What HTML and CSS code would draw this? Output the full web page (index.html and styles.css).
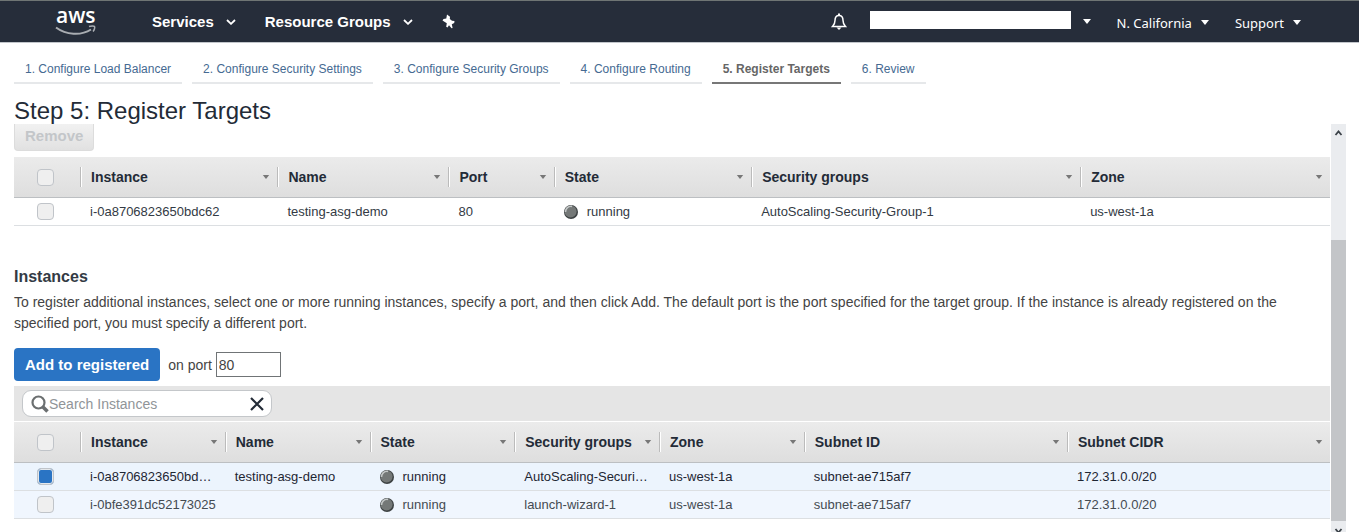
FILE: index.html
```html
<!DOCTYPE html>
<html lang="en">
<head>
<meta charset="utf-8">
<title>Step 5: Register Targets</title>
<link rel="stylesheet" href="styles.css">
</head>
<body>
<svg class="defs" aria-hidden="true">
  <symbol id="chevron" viewBox="0 0 10 6"><path d="M1 1l4 3.8L9 1" fill="none" stroke="currentColor" stroke-width="1.8"/></symbol>
  <symbol id="caret" viewBox="0 0 8 5"><path d="M0 0h8L4 5z" fill="currentColor"/></symbol>
  <symbol id="orb" viewBox="0 0 14 14"><circle cx="7" cy="7" r="7" fill="#3c4142"/><circle cx="6.6" cy="6.5" r="6" fill="#747877"/><path d="M1.5 7A5.5 5.5 0 0 1 8 1.4" fill="none" stroke="#c4c8c8" stroke-width="1.6"/></symbol>
</svg>

<header class="topbar">
  <a class="logo" href="#" aria-label="aws">
    <svg width="42" height="28" viewBox="0 0 42 28">
      <text x="1" y="15" class="logo-text">aws</text>
      <path d="M1 19.500c10 7.500 25 8.500 35 2" fill="none" stroke="#a9adb2" stroke-width="2"/>
      <path d="M34 18.500c2-.8 5-.8 5.500 0s0 3.500-1.500 5" fill="none" stroke="#a9adb2" stroke-width="1.500"/>
    </svg>
  </a>
  <nav class="mainnav">
    <button class="nav-item">Services <svg width="10" height="6"><use href="#chevron"/></svg></button>
    <button class="nav-item">Resource Groups <svg width="10" height="6"><use href="#chevron"/></svg></button>
    <button class="nav-item" aria-label="Pin shortcuts">
      <svg width="13" height="15" viewBox="0 0 13 15"><path d="M5 .5l3 2.300-.2 2.200 2.200 1.800 2.500.2-.3 2-2.400 1.200.8 3.800-1 .2-2.600-3-1.500 2.300-1.300-.8.600-3.500L.5 6.500 1.500 5l2.800-.4z" fill="#fff"/></svg>
    </button>
  </nav>
  <div class="account">
    <button class="bell" aria-label="Notifications">
      <svg width="16" height="18" viewBox="0 0 16 18"><path d="M1.500 13.500h13c-2-2-2.500-3.500-2.500-6 0-3-1.500-5-4-5s-4 2-4 5c0 2.500-.5 4-2.500 6z" fill="none" stroke="#fff" stroke-width="1.500"/><path d="M8 .5v2" stroke="#fff" stroke-width="2"/><path d="M5.500 14.500h5L8 17z" fill="#fff"/></svg>
    </button>
    <button class="user" aria-label="Account"><span class="user-name"></span><svg width="8" height="5"><use href="#caret"/></svg></button>
    <button class="menu">N. California <svg width="8" height="5"><use href="#caret"/></svg></button>
    <button class="menu">Support <svg width="8" height="5"><use href="#caret"/></svg></button>
  </div>
</header>

<nav class="steps">
  <a href="#">1. Configure Load Balancer</a>
  <a href="#">2. Configure Security Settings</a>
  <a href="#">3. Configure Security Groups</a>
  <a href="#">4. Configure Routing</a>
  <a href="#" class="current" aria-current="step">5. Register Targets</a>
  <a href="#">6. Review</a>
</nav>
<h1>Step 5: Register Targets</h1>

<div class="viewport">
  <main class="content">
    <button class="btn remove" disabled>Remove</button>
    <table class="grid">
      <colgroup><col class="c-check"><col class="w15"><col class="w13"><col class="w8"><col class="w15"><col class="w25"><col></colgroup>
      <thead><tr>
        <th><input type="checkbox" aria-label="Select all registered"></th>
        <th><div class="head">Instance <svg width="8" height="4"><use href="#caret"/></svg></div></th>
        <th><div class="head">Name <svg width="8" height="4"><use href="#caret"/></svg></div></th>
        <th><div class="head">Port <svg width="8" height="4"><use href="#caret"/></svg></div></th>
        <th><div class="head">State <svg width="8" height="4"><use href="#caret"/></svg></div></th>
        <th><div class="head">Security groups <svg width="8" height="4"><use href="#caret"/></svg></div></th>
        <th><div class="head">Zone <svg width="8" height="4"><use href="#caret"/></svg></div></th>
      </tr></thead>
      <tbody><tr>
        <td><input type="checkbox" aria-label="Select i-0a8706823650bdc62"></td>
        <td>i-0a8706823650bdc62</td><td>testing-asg-demo</td><td>80</td>
        <td><div class="state"><svg width="14" height="14"><use href="#orb"/></svg>running</div></td>
        <td>AutoScaling-Security-Group-1</td><td>us-west-1a</td>
      </tr></tbody>
    </table>

    <h2>Instances</h2>
    <p>To register additional instances, select one or more running instances, specify a port, and then click Add. The default port is the port specified for the target group. If the instance is already registered on the specified port, you must specify a different port.</p>

    <div class="add-row">
      <button class="btn add">Add to registered</button>
      <label for="port">on port</label>
      <input id="port" class="port" type="text" value="80">
    </div>

    <div class="searchbar">
      <div class="search">
        <svg width="18" height="18" viewBox="0 0 18 18"><circle cx="7.500" cy="7.500" r="6" fill="none" stroke="#6b6f70" stroke-width="2.200"/><path d="M11.500 11.500l5 5" stroke="#6b6f70" stroke-width="3.500"/></svg>
        <input type="text" placeholder="Search Instances" aria-label="Search Instances">
        <button aria-label="Clear search"><svg width="14" height="14" viewBox="0 0 14 14"><path d="M1 1l12 12M13 1L1 13" stroke="#232b37" stroke-width="2.200"/></svg></button>
      </div>
    </div>
    <table class="grid instances">
      <colgroup><col class="c-check"><col class="w11"><col class="w11"><col class="w11"><col class="w11"><col class="w11"><col class="w20"><col></colgroup>
      <thead><tr>
        <th><input type="checkbox" aria-label="Select all instances"></th>
        <th><div class="head">Instance <svg width="8" height="4"><use href="#caret"/></svg></div></th>
        <th><div class="head">Name <svg width="8" height="4"><use href="#caret"/></svg></div></th>
        <th><div class="head">State <svg width="8" height="4"><use href="#caret"/></svg></div></th>
        <th><div class="head">Security groups <svg width="8" height="4"><use href="#caret"/></svg></div></th>
        <th><div class="head">Zone <svg width="8" height="4"><use href="#caret"/></svg></div></th>
        <th><div class="head">Subnet ID <svg width="8" height="4"><use href="#caret"/></svg></div></th>
        <th><div class="head">Subnet CIDR <svg width="8" height="4"><use href="#caret"/></svg></div></th>
      </tr></thead>
      <tbody>
        <tr class="selected">
          <td><input type="checkbox" checked aria-label="Select first instance"></td>
          <td>i-0a8706823650bd…</td><td>testing-asg-demo</td>
          <td><div class="state"><svg width="14" height="14"><use href="#orb"/></svg>running</div></td>
          <td>AutoScaling-Securi…</td><td>us-west-1a</td><td>subnet-ae715af7</td><td>172.31.0.0/20</td>
        </tr>
        <tr>
          <td><input type="checkbox" aria-label="Select second instance"></td>
          <td>i-0bfe391dc52173025</td><td></td>
          <td><div class="state"><svg width="14" height="14"><use href="#orb"/></svg>running</div></td>
          <td>launch-wizard-1</td><td>us-west-1a</td><td>subnet-ae715af7</td><td>172.31.0.0/20</td>
        </tr>
      </tbody>
    </table>
  </main>
  <div class="scrollbar" aria-hidden="true">
    <svg width="15" height="16" viewBox="0 0 15 16"><path d="M4.500 11l3-3.500 3 3.500" fill="none" stroke="#3b4248" stroke-width="1.800"/></svg>
    <div class="thumb"></div>
    <svg width="15" height="16" viewBox="0 0 15 16"><path d="M4.500 8l3 3.500 3-3.500" fill="none" stroke="#3b4248" stroke-width="1.800"/></svg>
  </div>
</div>
</body>
</html>
```
FILE: styles.css
```css
* { box-sizing: border-box; }
body {
  margin: 0;
  height: 100vh;
  display: flex;
  flex-direction: column;
  overflow: hidden;
  background: #fff;
  color: #444;
  font-family: "Liberation Sans", Arial, sans-serif;
  font-size: 14px;
}
button { font-family: inherit; border: 0; padding: 0; background: none; color: inherit; }
svg { display: block; flex: none; }
.defs { position: absolute; width: 0; height: 0; }

.topbar {
  flex: none;
  display: flex;
  align-items: center;
  height: 43px;
  padding: 0 58px 0 55px;
  background: #262d3a;
  border-top: 1px solid #6f7574;
  border-bottom: 1px solid #c2c6cb;
  color: #fff;
}
.logo { margin-right: 55px; }
.logo svg { overflow: visible; }
.logo-text { font: 600 21px "Open Sans", "Noto Sans", sans-serif; fill: #fff; }
.mainnav { display: flex; gap: 29px; }
.nav-item { display: flex; align-items: center; gap: 12px; font-size: 15px; font-weight: bold; }
.account { display: flex; align-items: center; margin-left: auto; gap: 26px; }
.bell { margin-right: -3px; }
.user { display: flex; align-items: center; gap: 12px; }
.user-name { width: 201px; height: 18px; margin-bottom: 4px; background: #fff; }
.menu { display: flex; align-items: center; gap: 9px; padding-top: 2px; font: 13px "Noto Sans", sans-serif; }

.steps { flex: none; display: flex; gap: 10px; padding: 16px 14px 0; }
.steps a {
  padding: 0 11px;
  height: 25px;
  line-height: 20px;
  border-bottom: 2px solid #e6e8ea;
  color: #456a92;
  font-size: 12px;
  text-decoration: none;
}
.steps .current { color: #666; font-weight: bold; border-bottom-color: #777; }
h1 { flex: none; margin: 0; padding: 14px 14px 0; height: 40px; font-size: 24px; font-weight: normal; line-height: 26px; color: #232b37; }

.viewport { flex: 1; min-height: 0; display: flex; overflow: hidden; padding: 0 12px 0 14px; }
.content { flex: 1; min-width: 0; }
.btn { display: block; height: 33px; padding: 0 11px; border-radius: 4px; font-size: 15px; font-weight: bold; }
.remove {
  height: 27px;
  margin: 0 0 6px;
  border: 1px solid #dcdcdc;
  border-top: 0;
  border-radius: 0 0 4px 4px;
  padding: 0 10px 4px;
  background: linear-gradient(#f1f1f1, #e1e1e1);
  color: #c3c6c9;
}

.grid { width: 100%; table-layout: fixed; border-collapse: separate; border-spacing: 0; }
.c-check { width: 66px; }
.w8 { width: 8%; }
.w11 { width: 11%; }
.w13 { width: 13%; }
.w15 { width: 15%; }
.w20 { width: 20%; }
.w25 { width: 25%; }
.grid th {
  height: 41px;
  padding: 0;
  background: linear-gradient(#ebebeb, #dedede);
  border-bottom: 1px solid #bcbfc2;
  text-align: left;
  color: #232b37;
}
.head {
  display: flex;
  align-items: center;
  justify-content: space-between;
  height: 20px;
  padding: 0 7px 0 10px;
  border-left: 1px solid #bbb;
  box-shadow: inset 1px 0 #fff;
  white-space: nowrap;
}
.head svg { color: #777; }
.grid td {
  height: 28px;
  padding: 0 0 0 10px;
  border-bottom: 1px solid #dcdfe2;
  font-size: 13px;
  color: #333a44;
  white-space: nowrap;
}
.instances td { background: #f0f6fe; color: #444b52; }
.instances .selected td { background: #ecf4fd; color: #1e2633; }
.state { display: flex; align-items: center; gap: 9px; }
.grid th:first-child, .grid td:first-child { padding: 0 0 0 23px; }
.grid input {
  appearance: none;
  display: block;
  width: 17px;
  height: 17px;
  margin: 0;
  border: 1px solid #c0c4c9;
  border-radius: 4px;
  background: #efefef;
}
.grid input:checked { background: #2a74c4; box-shadow: inset 0 0 0 1px #e4e8ec; }

h2 { margin: 42px 0 6px; font-size: 16px; line-height: 18px; color: #333a44; }
p { margin: 0; padding-right: 16px; line-height: 21px; }
.add-row { display: flex; align-items: center; margin: 14px 0 5px; }
.add { background: #2a74c4; color: #fff; margin-right: 8px; }
.port { width: 65px; height: 25px; margin-left: 4px; padding: 0 2px; border: 1px solid #707476; font: inherit; color: inherit; }
.searchbar { height: 36px; padding: 4px 8px; background: #e5e5e5; border-bottom: 1px solid #fff; }
.search {
  display: flex;
  align-items: center;
  width: 250px;
  height: 27px;
  padding: 0 7px 0 8px;
  background: #fff;
  border: 1px solid #c4c7ca;
  border-radius: 9px;
}
.search input { flex: 1; min-width: 0; border: 0; padding: 0; outline: 0; background: none; font: inherit; }
.search input::placeholder { color: #909498; }

.scrollbar { flex: none; display: flex; flex-direction: column; justify-content: space-between; width: 15px; height: calc(100% + 5px); margin: 0 1px; background: #eaecef; }
.thumb { height: 68%; margin-top: auto; background: #c3c5c8; }
```
